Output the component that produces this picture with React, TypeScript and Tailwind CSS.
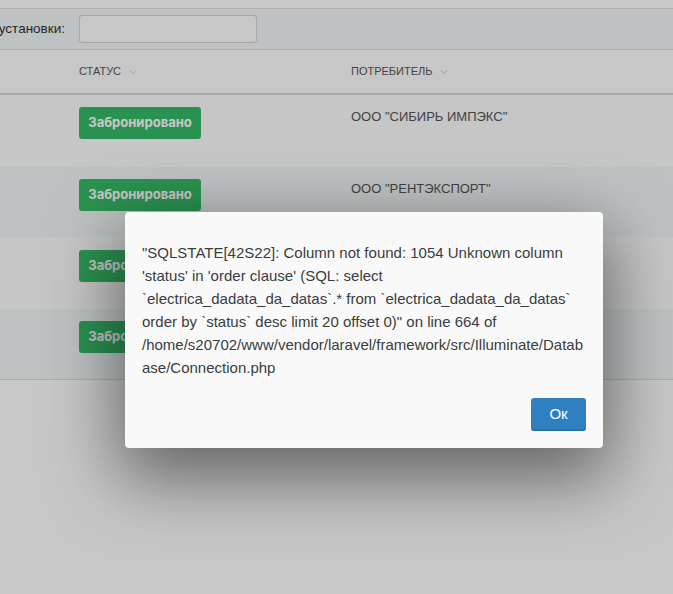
import { ChevronDown } from 'lucide-react';

const rows = [
  { status: 'Забронировано', consumer: 'ООО "СИБИРЬ ИМПЭКС"' },
  { status: 'Забронировано', consumer: 'ООО "РЕНТЭКСПОРТ"' },
  { status: 'Забронировано', consumer: '' },
  { status: 'Забронировано', consumer: '' },
];

// wrapped the same way the dialog wraps it
const messageLines = [
  '"SQLSTATE[42S22]: Column not found: 1054 Unknown column',
  "'status' in 'order clause' (SQL: select",
  '`electrica_dadata_da_datas`.* from `electrica_dadata_da_datas`',
  'order by `status` desc limit 20 offset 0)" on line 664 of',
  '/home/s20702/www/vendor/laravel/framework/src/Illuminate/Datab',
  'ase/Connection.php',
];

export default function App() {
  return (
    <div className="relative h-[594px] w-full overflow-hidden bg-white font-['Liberation_Sans',Arial,sans-serif]">
      {/* page under the backdrop */}
      <div className="h-[9px] border-b border-[#e4e4e4]" />
      <div className="flex h-[41px] items-center border-b border-[#dedede] bg-[#f4f9f9]">
        <div className="flex w-[65px] shrink-0 justify-end whitespace-nowrap text-[13.5px] text-[#333]">
          Дата установки:
        </div>
        <div className="ml-[14px] h-[28px] w-[178px] rounded-[3px] border border-[#d6d6d6] bg-white" />
      </div>
      <div className="flex h-[45px] items-center border-b-2 border-[#d8d8d8] text-[11px] uppercase text-[#555]">
        <div className="flex w-[351px] shrink-0 items-center gap-[6px] pl-[79px]">
          Статус <ChevronDown className="h-3 w-3 text-[#bbb]" strokeWidth={1.5} />
        </div>
        <div className="flex items-center gap-[6px]">
          Потребитель <ChevronDown className="h-3 w-3 text-[#bbb]" strokeWidth={1.5} />
        </div>
      </div>
      <div className="border-b border-[#dedede]">
        {rows.map((r, i) => (
          <div
            key={i}
            className={
              'flex h-[71px] items-start border-t border-white first:border-t-0 ' +
              (i % 2 === 1 ? 'bg-[#f4f9f9]' : 'bg-[#fefefe]')
            }
          >
            <div className="w-[351px] shrink-0 pl-[79px] pt-[12px]">
              <span className="inline-flex h-[32px] w-[122px] items-center justify-center rounded-[3px] bg-[#37bc67] font-['Inter',sans-serif] text-[13px] font-bold text-white">
                {r.status}
              </span>
            </div>
            <div className="pt-[12px] text-[13px] text-[#555]">{r.consumer}</div>
          </div>
        ))}
      </div>

      {/* backdrop */}
      <div className="absolute inset-0 bg-black/[0.22]" />

      {/* dialog */}
      <div className="absolute left-[125px] top-[212px] w-[478px] rounded-[4px] bg-[#f9f9f9] pb-[17px] pl-[17px] pr-[15px] pt-[29px] shadow-[0_24px_70px_6px_rgba(0,0,0,0.5)]">
        <p className="whitespace-nowrap text-[15px] leading-[23px] text-[#3a3d40]">
          {messageLines.map((line, i) => (
            <span key={i} className="block">
              {line}
            </span>
          ))}
        </p>
        <div className="mt-[19px] flex justify-end pr-[2px]">
          <button className="h-[33px] w-[55px] rounded-[3px] bg-[#2f80c0] text-[15px] text-white shadow-[inset_0_-2px_0_rgba(0,0,0,0.12)]">
            Ок
          </button>
        </div>
      </div>
    </div>
  );
}
